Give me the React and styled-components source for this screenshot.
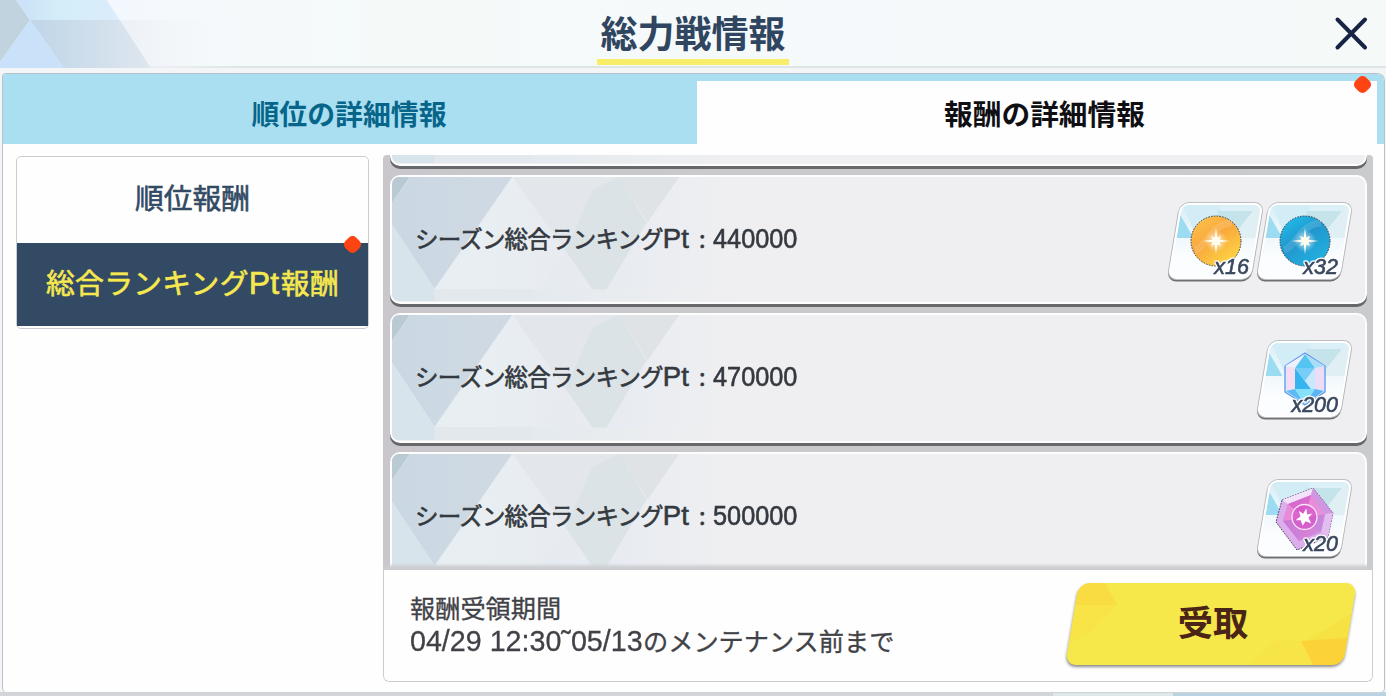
import React from "react";
import styled, { createGlobalStyle } from "styled-components";

const jp = `"Noto Sans CJK JP", sans-serif`;
const latin = `"Liberation Sans", "Noto Sans CJK JP", sans-serif`;

const GlobalStyle = createGlobalStyle`
  *, *::before, *::after { box-sizing: border-box; }
  body { margin: 0; overflow: hidden; background: #f0f1f3; }
  button { border: 0; padding: 0; background: none; font: inherit; color: inherit; }
`;

const Screen = styled.div`
  width: 1386px;
  height: 696px;
  display: flex;
  flex-direction: column;
  overflow: hidden;
  font-family: ${jp};
  background: #d3d5d8;
`;

const Header = styled.header`
  position: relative;
  flex: none;
  height: 68px;
  display: grid;
  grid-template-columns: 1fr auto 1fr;
  border-bottom: 2px solid #dfe4e6;
  background: linear-gradient(90deg, #f4f8fd, #f5faf9 30%, #f5f9fb 60%, #f5f9f8);
`;

const HeaderArt = styled.svg`
  position: absolute;
  left: 0;
  top: 0;
`;

const Title = styled.h1`
  grid-column: 2;
  align-self: start;
  margin: 0;
  width: 192px;
  height: 65px;
  border-bottom: 6px solid #f9ee69;
  color: #30455f;
  font-size: 37px;
  font-weight: 700;
  line-height: 64px;
  text-align: center;
  white-space: nowrap;
`;

const CloseButton = styled.button`
  justify-self: end;
  align-self: start;
  margin: 16px 17px 0 0;
  width: 36px;
  height: 36px;
`;

const Window = styled.main`
  flex: none;
  height: 628px;
  padding: 5px 0 3px;
  background: linear-gradient(90deg, #d3d5d8 0 76%, #e0e7ea 76% 84.6%, #b9d3e2 84.6%) bottom / 100% 4px no-repeat, #f3f5f6;
`;

const Frame = styled.div`
  height: 620px;
  margin: 0 1px 0 2px;
  border: 1px solid #b9c2cb;
  border-bottom-color: #cfd2d6;
  border-radius: 4px 8px 5px 5px;
  background: #fefefe;
  overflow: hidden;
`;

const Tabs = styled.nav`
  height: 70px;
  display: grid;
  grid-template-columns: 694px 680px;
  background: #aadff2;
`;

const Tab = styled.button`
  position: relative;
  margin-top: ${(p) => (p.$active ? 7 : 0)}px;
  height: ${(p) => (p.$active ? 63 : 70)}px;
  background: ${(p) => (p.$active ? "#fefefe" : "transparent")};
  color: ${(p) => (p.$active ? "#101014" : "#08658a")};
  font-size: ${(p) => (p.$active ? 28.7 : 27.9)}px;
  font-weight: 700;
  line-height: 40px;
  padding: ${(p) => (p.$active ? "1px 0 0 15px" : "8px 2px 0 0")};
`;

const Alert = styled.i`
  position: absolute;
  right: ${(p) => p.$right}px;
  top: ${(p) => p.$top}px;
  width: 15px;
  height: 15px;
  border-radius: 5px;
  background: #ff4414;
  transform: rotate(45deg);
`;

const Content = styled.div`
  display: flex;
  gap: 14px;
  padding: 11px 0 0 13px;
`;

const SideMenu = styled.aside`
  flex: none;
  width: 353px;
  height: 173px;
  margin-top: 1px;
  padding-bottom: 2px;
  border: 1.5px solid #c8ccd3;
  border-radius: 5px;
`;

const SideItem = styled.button`
  position: relative;
  display: block;
  width: 100%;
  height: ${(p) => (p.$active ? 83 : 86)}px;
  padding-bottom: ${(p) => (p.$active ? 4 : 6)}px;
  background: ${(p) => (p.$active ? "#334a65" : "transparent")};
  color: ${(p) => (p.$active ? "#f6e84f" : "#334a65")};
  -webkit-text-stroke: 0.6px currentColor;
  font-size: 28.8px;
  letter-spacing: ${(p) => (p.$active ? 0.3 : 0)}px;
  line-height: 40px;
  white-space: nowrap;
`;

const Panel = styled.section`
  flex: none;
  width: 990px;
  height: 527px;
  display: flex;
  flex-direction: column;
  border-radius: 4px 4px 6px 6px;
  overflow: hidden;
`;

const List = styled.div`
  position: relative;
  height: 415px;
  padding: 0 6px 0 7px;
  display: flex;
  flex-direction: column;
  gap: 9px;
  overflow: hidden;
  background: linear-gradient(90deg, #c9c7cb, #cacbcd);
  &::after {
    content: "";
    position: absolute;
    inset: auto 0 0 0;
    height: 7px;
    background: linear-gradient(#cccccf00, #cbcccf 70%);
  }
`;

const Card = styled.article`
  position: relative;
  flex: none;
  height: 129.5px;
  margin-top: ${(p) => (p.$scrolled ? -118.8 : 0)}px;
  display: flex;
  align-items: center;
  justify-content: space-between;
  padding: 0 19px 0 23px;
  border: 2.5px solid #fdfdfe;
  border-radius: 10px;
  background: #efeff1;
  box-shadow: 0 3px 0 #67686c;
`;

const CardArt = styled.svg`
  position: absolute;
  left: 0;
  top: 0;
  border-radius: 7px;
`;

const CardLabel = styled.div`
  position: relative;
  display: flex;
  align-items: baseline;
  margin-bottom: 2px;
  color: #343940;
  font-size: 23.5px;
  letter-spacing: -0.8px;
  line-height: 34px;
  white-space: nowrap;
  -webkit-text-stroke: 0.6px currentColor;
`;

/* Condensed latin run: a fixed $width box with horizontally scaled glyphs. */
const Latin = styled.span`
  display: inline-block;
  width: ${(p) => p.$width}px;
  font-family: ${latin};
  font-size: ${(p) => p.$size}px;
  letter-spacing: 0;
  text-align: left;
  transform: scaleX(${(p) => p.$squeeze || 1});
  transform-origin: left;
`;

const Colon = styled.span`
  width: 22px;
  text-align: center;
`;

const Rewards = styled.div`
  position: relative;
  display: flex;
  gap: 6px;
  margin-top: 3px;
`;

const Chip = styled.div`
  position: relative;
  width: 83px;
  height: 76px;
`;

const Plate = styled.div`
  width: 83px;
  height: 76px;
  overflow: hidden;
  border: 2px solid #fff;
  border-radius: 9px;
  background: linear-gradient(#daeff7, #fbfdfe 72%);
  box-shadow: 0 0 0 1px #bcbec2, 0 2px 0 0.5px #6f7074;
  transform: skewX(-9.5deg);
  svg { display: block; }
`;

const ItemArt = styled.svg`
  position: absolute;
  left: 12px;
  top: 7px;
`;

const Amount = styled.span`
  position: absolute;
  right: 8px;
  bottom: -1px;
  color: #39475f;
  font-family: ${latin};
  font-size: 21.5px;
  font-style: italic;
  line-height: 26px;
  -webkit-text-stroke: 0.6px currentColor;
  filter: drop-shadow(1px 0 0 #fff) drop-shadow(-1px 0 0 #fff) drop-shadow(0 1px 0 #fff) drop-shadow(0 -1px 0 #fff);
`;

const Footer = styled.footer`
  flex: 1;
  display: flex;
  justify-content: space-between;
  padding: 13px 22px 0 26px;
  border: 1.5px solid #cbcbcf;
  border-top-width: 0;
  border-radius: 0 0 6px 6px;
  background: #fefefe;
`;

const Period = styled.div`
  padding-top: 8px;
  color: #414247;
  font-size: 25.2px;
  line-height: 33px;
  white-space: nowrap;
  -webkit-text-stroke: 0.3px currentColor;
  p { margin: 0; height: 33px; }
`;

const ClaimButton = styled.button`
  position: relative;
  width: 278px;
  height: 82px;
  color: #4b2418;
  font-size: 35.3px;
  font-weight: 700;
  line-height: 50px;
  padding: 0 0 7px 4px;
  span { position: relative; }
`;

const ClaimPlate = styled.div`
  position: absolute;
  inset: 0;
  overflow: hidden;
  border-radius: 11px;
  background: #f6e84a;
  box-shadow: 0 2px 3px #8b8b8b;
  transform: skewX(-9.5deg);
`;

function Cross() {
  return (
    <svg width="36" height="36" viewBox="0 0 36 36" stroke="#172444" strokeWidth="4" strokeLinecap="round">
      <path d="M4.5 3.5 32 31.5M32 3.5 4.5 31.5" />
    </svg>
  );
}

function HeaderTriangles() {
  return (
    <HeaderArt width="320" height="68" viewBox="0 0 320 68">
      <defs>
        <linearGradient id="h1"><stop stopColor="#cbe0f8" /><stop offset=".4" stopColor="#d3edf9" /><stop offset="1" stopColor="#dcecfb" /></linearGradient>
        <linearGradient id="h2"><stop stopColor="#bfd5e8" /><stop offset="1" stopColor="#dfe7ef" /></linearGradient>
        <linearGradient id="h3"><stop stopColor="#edf1f7" /><stop offset="1" stopColor="#f5f9fb" stopOpacity="0" /></linearGradient>
        <linearGradient id="h4"><stop stopColor="#f3f8ff" /><stop offset="1" stopColor="#f5f9fb" stopOpacity="0" /></linearGradient>
      </defs>
      <path fill="#c2d3e0" d="M0 0H16L30 20 0 62Z" />
      <path fill="url(#h1)" d="M16 0H107L120 20H30Z" />
      <path fill="#cae1fa" d="M30 20 64 68H0V62Z" />
      <path fill="url(#h2)" d="M30 20H120L151 68H64Z" />
      <path fill="url(#h3)" d="M120 20H240V68H151Z" />
      <path fill="url(#h4)" d="M107 0H240V20H120Z" />
    </HeaderArt>
  );
}

function CardTriangles() {
  return (
    <CardArt width="340" height="124.5" viewBox="2.5 2.5 340 124.5">
      <defs>
        <linearGradient id="c1"><stop stopColor="#cad8e3" /><stop offset="1" stopColor="#d0d9e3" /></linearGradient>
        <linearGradient id="c2"><stop stopColor="#e8eff2" /><stop offset="1" stopColor="#e8ebf1" /></linearGradient>
        <linearGradient id="c3"><stop stopColor="#dce6ec" /><stop offset="1" stopColor="#efeff1" /></linearGradient>
        <linearGradient id="c4"><stop stopColor="#e6ebf2" /><stop offset="1" stopColor="#efeff1" /></linearGradient>
        <linearGradient id="c5"><stop stopColor="#e5ebf0" /><stop offset="1" stopColor="#e9ebf2" /></linearGradient>
      </defs>
      <path fill="url(#c3)" d="M0 0H340V130H0Z" />
      <path fill="url(#c4)" d="M203 115 257 48 290 2H340V115Z" />
      <path fill="#b9cad3" d="M0 0H22L0 32Z" />
      <path fill="url(#c1)" d="M22 1H124L45 114 0 46V32Z" />
      <path fill="#d7e4ec" d="M0 46 45 114V130H0Z" />
      <path fill="url(#c2)" d="M123 2 203 115H45Z" />
      <path fill="url(#c5)" d="M176 76 203 115H150Z" />
      <path fill="#e3e6ea" d="M123 2H230L203 15 176 76Z" />
      <path fill="#dce3e7" d="M203 15 230 2 257 48 217 115H203L176 76Z" />
      <path fill="#dfe3e6" d="M230 2H290L258 48Z" />
      <path fill="#e2e8eb" d="M45 115H145L137 130H45Z" />
    </CardArt>
  );
}

const STAR = "M0-16 1.5-4 6-6 4-1.5 16 0 4 1.5 6 6 1.5 4 0 16-1.5 4-6 6-4 1.5-16 0-4-1.5-6-6-1.5-4Z";

function Orb({ id, from, mid, to }) {
  return (
    <ItemArt width="60" height="62" viewBox="0 0 60 62">
      <defs>
        <linearGradient id={id} x1="0.1" y1="0" x2=".8" y2="1">
          <stop stopColor={from} /><stop offset=".45" stopColor={mid} /><stop offset="1" stopColor={to} />
        </linearGradient>
        <radialGradient id={`${id}-glow`}>
          <stop stopColor="#fff" stopOpacity=".8" /><stop offset="1" stopColor="#fff" stopOpacity="0" />
        </radialGradient>
      </defs>
      <circle cx="30" cy="31" r="25" fill={`url(#${id})`} stroke="#333c48" strokeWidth="1" strokeDasharray="1.6 1.2" />
      <path d="M9 40C20 38 25 14 46 13" fill="none" stroke="#fff" strokeWidth="7" opacity=".13" />
      <circle cx="30" cy="31" r="11" fill={`url(#${id}-glow)`} />
      <path d={STAR} transform="translate(30 31) scale(.85)" fill="#fffdf0" />
    </ItemArt>
  );
}

function Pyroxene() {
  return (
    <ItemArt width="60" height="62" viewBox="0 0 60 62">
      <path fill="#d5edfb" stroke="#6294ee" strokeWidth="1.3" strokeLinejoin="round" d="M30 5 50 18V44L30 57 10 44V18Z" />
      <path fill="#54c4f1" d="M30 6 40 20H20Z" />
      <path fill="#a9defa" d="M30 6 50 18 40 20Z" />
      <path fill="#eef0fd" d="M30 6 10 18 20 20Z" />
      <path fill="#f5dcf3" d="M11 19 20 20V41L12 42Z" />
      <path fill="#35b4f0" d="M20 20 36 41H20Z" />
      <path fill="#77cdf7" d="M20 20H40L30 33Z" />
      <path fill="#c8e8ff" d="M40 20V41H36L30 33Z" />
      <path fill="#ecdcf6" d="M40 20 49 19V42L40 41Z" />
      <path fill="#5dbbf4" d="M11 43 20 41 30 56Z" />
      <path fill="#87e0fa" d="M20 41H40L30 56Z" />
      <path fill="#5ab5f2" d="M40 41 49 43 30 56Z" />
    </ItemArt>
  );
}

function Coin() {
  return (
    <ItemArt width="60" height="66" viewBox="0 0 60 66">
      <defs>
        <linearGradient id="coin" x1="0" y1="0" x2="1" y2="1">
          <stop stopColor="#cf62cb" /><stop offset=".5" stopColor="#e070cf" /><stop offset="1" stopColor="#c69ae4" />
        </linearGradient>
      </defs>
      <path fill="#dcaeec" stroke="#46384f" strokeWidth="1" strokeDasharray="1.6 1.2" d="M7 13 38 1 58 26 53 50 22 63 1 35Z" />
      <path fill="#f2e2fa" d="M7 13 38 1 36 8 13 17Z" />
      <path fill="#d096e2" d="M38 1 58 26 50 27 36 8Z" />
      <path fill="#e4bdf0" d="M58 26 53 50 46 45 50 27Z" />
      <path fill="url(#coin)" d="M13 17 36 8 50 27 46 45 24 54 8 34Z" />
      <path fill="#ec9ade" opacity=".7" d="M13 17 30 31 8 34ZM30 31 50 27 36 8Z" />
      <path fill="#b98ade" opacity=".5" d="M30 31 24 54 8 34ZM30 31 46 45 50 27Z" />
      <circle cx="29.5" cy="30" r="12.5" fill="#d650c6" fillOpacity=".65" stroke="#fbe5fb" strokeWidth="1.3" />
      <path d="M0-9 2-3 7-5 4 0 8 5 2 4 0 9-3 4-8 5-4 0-7-5-2-3Z" transform="translate(29.5 30) rotate(12)" fill="#fff" />
    </ItemArt>
  );
}

const ART = {
  gold: <Orb id="gold" from="#ffc44f" mid="#f8a83c" to="#ffd945" />,
  blue: <Orb id="blue" from="#20c1ed" mid="#2196cd" to="#23b4e2" />,
  pyroxene: <Pyroxene />,
  coin: <Coin />,
};

function RewardChip({ kind, count }) {
  return (
    <Chip>
      <Plate>
        <svg width="79" height="72" viewBox="0 0 79 72">
          <path fill="#d3edf7" d="M0 0H38L52 32H20Z" />
          <path fill="#9cdcf3" d="M0 10 17 33H0Z" />
          <path fill="#c5e3ea" d="M36 6H72L56 32H48Z" />
          <path fill="#e0eff3" d="M72 6 79 0V33H56Z" />
        </svg>
      </Plate>
      {ART[kind]}
      <Amount>x{count}</Amount>
    </Chip>
  );
}

const ROWS = [
  { points: "440000", items: [["gold", 16], ["blue", 32]] },
  { points: "470000", items: [["pyroxene", 200]] },
  { points: "500000", items: [["coin", 20]] },
];

export default function App() {
  return (
    <>
      <GlobalStyle />
      <Screen>
        <Header>
          <HeaderTriangles />
          <Title>総力戦情報</Title>
          <CloseButton aria-label="閉じる"><Cross /></CloseButton>
        </Header>
        <Window>
          <Frame>
            <Tabs>
              <Tab>順位の詳細情報</Tab>
              <Tab $active>報酬の詳細情報<Alert $right={7} $top={-4} /></Tab>
            </Tabs>
            <Content>
              <SideMenu>
                <SideItem>順位報酬</SideItem>
                <SideItem $active>総合ランキング<Latin $size={32} $width={32}>Pt</Latin>報酬<Alert $right={8} $top={-6} /></SideItem>
              </SideMenu>
              <Panel>
                <List>
                  <Card $scrolled><CardTriangles /></Card>
                  {ROWS.map((row) => (
                    <Card key={row.points}>
                      <CardTriangles />
                      <CardLabel>
                        <span>シーズン総合ランキング</span>
                        <Latin $size={27.5} $width={28}>Pt</Latin>
                        <Colon>:</Colon>
                        <Latin $size={27.5} $width={86} $squeeze={0.92}>{row.points}</Latin>
                      </CardLabel>
                      <Rewards>
                        {row.items.map(([kind, count]) => <RewardChip key={kind} kind={kind} count={count} />)}
                      </Rewards>
                    </Card>
                  ))}
                </List>
                <Footer>
                  <Period>
                    <p>報酬受領期間</p>
                    <p><Latin $size={30} $width={233} $squeeze={0.955}>04/29&nbsp;12:30˜05/13</Latin>のメンテナンス前まで</p>
                  </Period>
                  <ClaimButton>
                    <ClaimPlate>
                      <svg width="278" height="82" viewBox="0 0 278 82">
                        <path fill="#fcd43c" d="M0 0H26L42 22H0Z" opacity=".6" />
                        <path fill="#f9df42" d="M0 22H42L20 48 0 60Z" opacity=".5" />
                        <path fill="#f8dc40" d="M185 82 205 58H237L255 82Z" opacity=".35" />
                        <path fill="#f9da3c" d="M237 58 278 30V56Z" opacity=".4" />
                        <path fill="#fccd35" d="M232 58 278 55V82H248Z" opacity=".8" />
                      </svg>
                    </ClaimPlate>
                    <span>受取</span>
                  </ClaimButton>
                </Footer>
              </Panel>
            </Content>
          </Frame>
        </Window>
      </Screen>
    </>
  );
}
